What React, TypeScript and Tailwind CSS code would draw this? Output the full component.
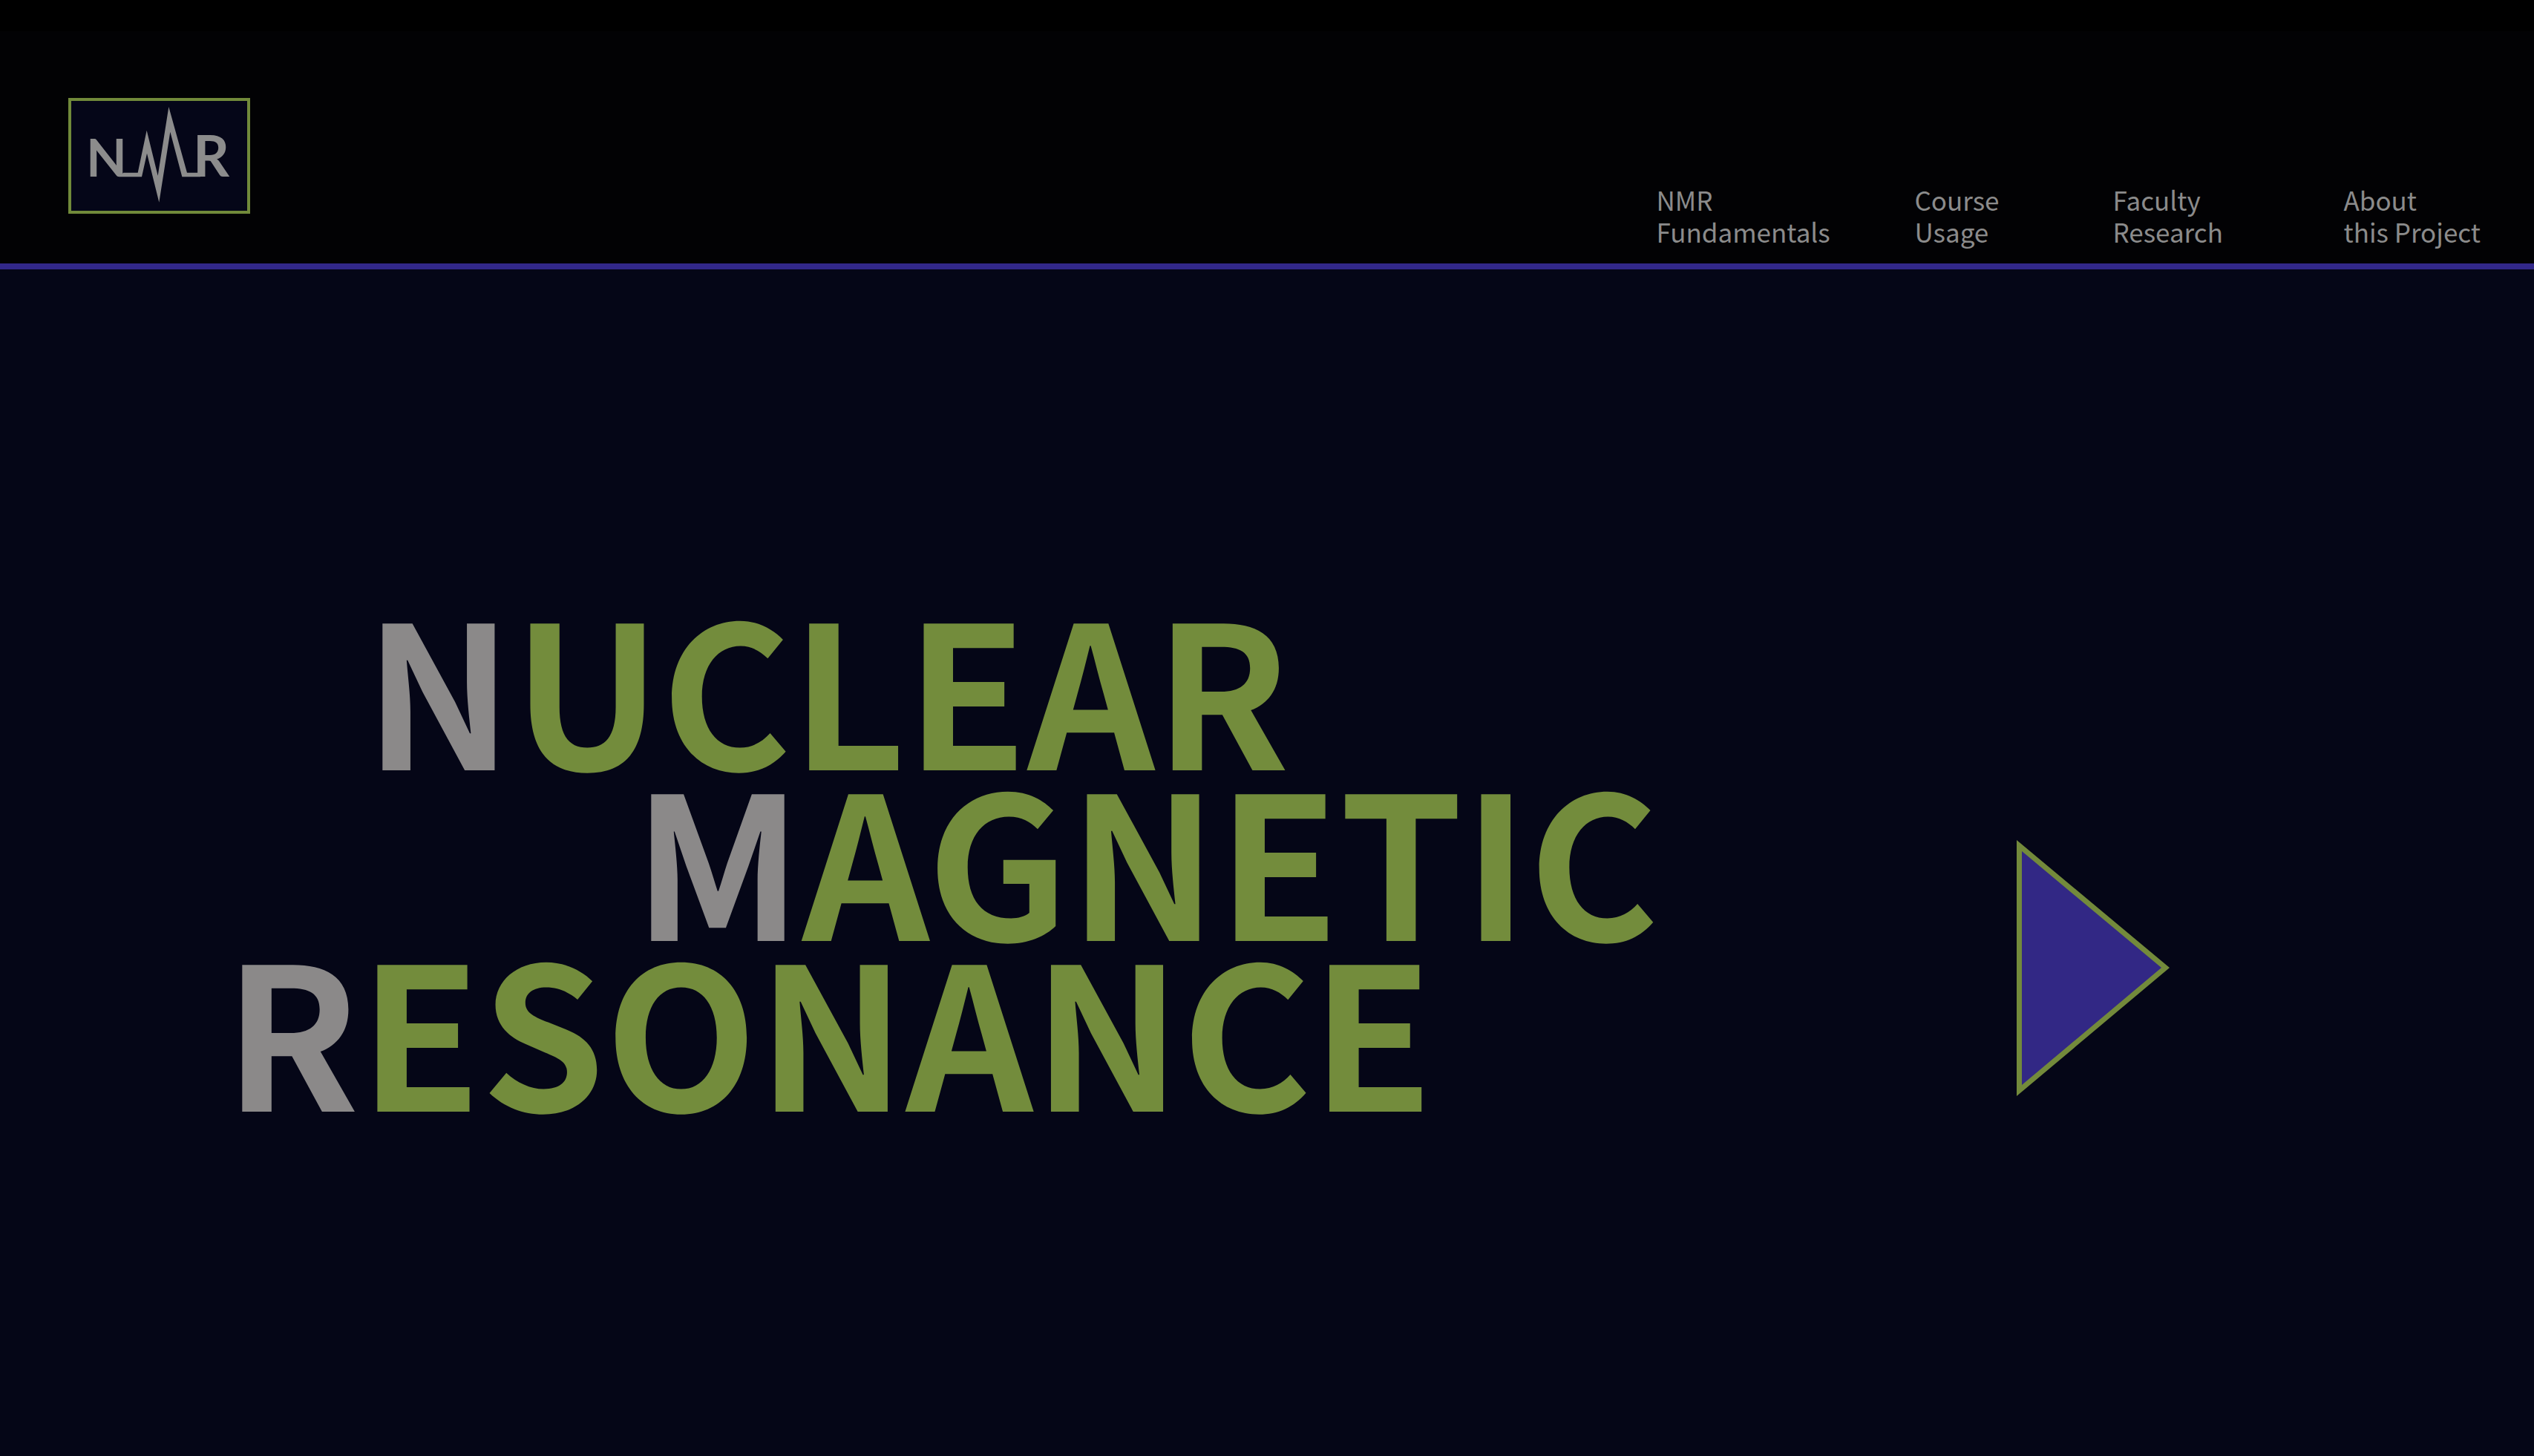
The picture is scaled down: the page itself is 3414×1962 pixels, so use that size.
const links = [
  ["NMR", "Fundamentals"],
  ["Course", "Usage"],
  ["Faculty", "Research"],
  ["About", "this Project"],
];

function Logo() {
  return (
    <a href="#home" aria-label="NMR home" className="ml-[92px] mt-[132px] block h-[156px] w-[245px] border-4 border-[#718a3a] bg-[#050618]">
      <svg viewBox="0 0 711 444" className="h-full w-full" fill="#8c8c8c">
        <g transform="translate(-78 -78)" fontFamily="Lato">
          <text x="138" y="385" fontSize="214" fontWeight="700">N</text>
          <text x="570" y="385" fontSize="229" fontWeight="700">R</text>
          <polygon points="270,385 289,368 347,368 383,197 428,380 472,102 546,368 600,368 600,385 526,385 478,203 433,488 384,290 363,385" />
        </g>
      </svg>
    </a>
  );
}

function TitleLine({ initial, rest, indent }: { initial: string; rest: string; indent: string }) {
  return (
    <span className={`block ${indent}`}>
      <span className="text-[#8b8989]">{initial}</span>
      {rest}
    </span>
  );
}

export default function App() {
  return (
    <div className="flex min-h-screen flex-col bg-[#050617] font-['Noto_Sans_CJK_SC','Noto_Sans',sans-serif]">
      <header className="flex items-start justify-between border-b-8 border-[#32288a] bg-[linear-gradient(#000_42px,#020204_42px)] pb-[67px]">
        <Logo />
        <nav className="mt-[247px] -mb-[67px] grid grid-cols-[348px_267px_311px_auto] pr-[72px] text-[35px] leading-[43px] text-[#8b8b8b]">
          {links.map(([first, second]) => (
            <a key={first} href={`#${first.toLowerCase()}`} className="whitespace-nowrap">
              {first}
              <br />
              {second}
            </a>
          ))}
        </nav>
      </header>
      <main className="flex flex-1 items-start pt-[444px]">
        <h1 className="w-[2717px] pl-[302px] text-[267px] leading-[230px] font-bold whitespace-nowrap text-[#738c3c]">
          <TitleLine initial="N" rest="UCLEAR" indent="pl-[189px]" />
          <TitleLine initial="M" rest="AGNETIC" indent="pl-[551px]" />
          <TitleLine initial="R" rest="ESONANCE" indent="pl-0" />
        </h1>
        <button type="button" aria-label="Next" className="mt-[325px] h-[345px] w-[206px] cursor-pointer">
          <svg viewBox="0 0 206 345" className="h-full w-full">
            <polygon points="0,0 206,172 0,345" fill="#738a3b" />
            <polygon points="7,15 195,172 7,330" fill="#322885" />
          </svg>
        </button>
      </main>
    </div>
  );
}
